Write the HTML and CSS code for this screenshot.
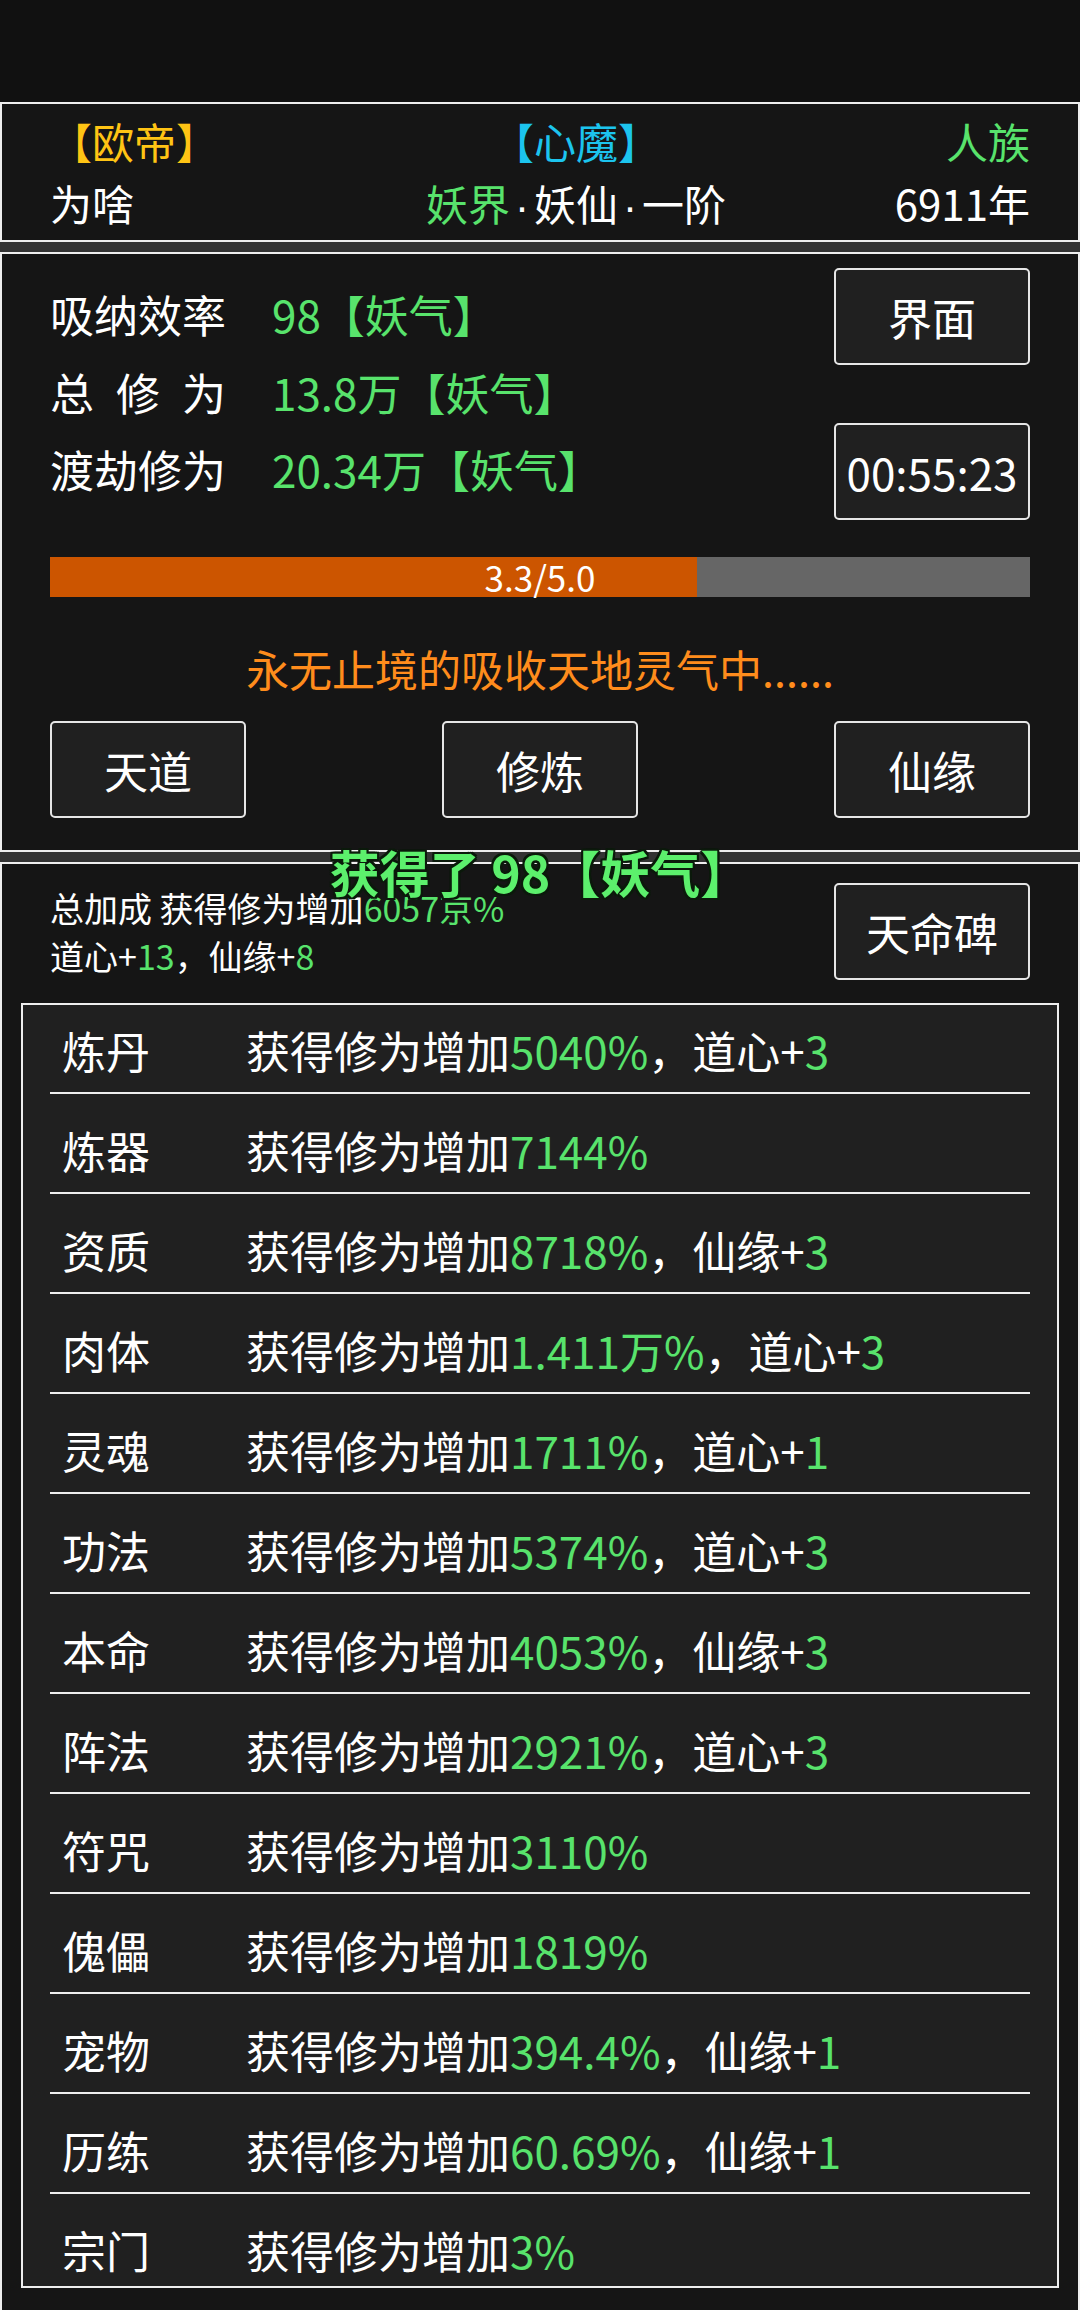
FILE: index.html
```html
<!DOCTYPE html>
<html lang="zh-CN">
<head>
  <meta charset="UTF-8" />
  <title>修炼</title>
  <link rel="stylesheet" href="styles.css">
</head>
<body>
  <div class="status-bar"></div>

  <div class="panel header">
    <div class="header-row">
      <span class="yellow">【欧帝】</span>
      <span class="mid cyan">【心魔】</span>
      <span class="right green">人族</span>
    </div>
    <div class="header-row">
      <span>为啥</span>
      <span class="mid"><span class="green">妖界</span><span class="dot">·</span>妖仙<span class="dot">·</span>一阶</span>
      <span class="right">6911年</span>
    </div>
  </div>

  <div class="gap"></div>

  <div class="panel cultivate">
    <div class="stats-row">
      <div class="stats">
        <div class="stat">
          <span class="label">吸纳效率</span>
          <span class="value green">98【妖气】</span>
        </div>
        <div class="stat">
          <span class="label spread"><span>总</span><span>修</span><span>为</span></span>
          <span class="value green">13.8万【妖气】</span>
        </div>
        <div class="stat">
          <span class="label">渡劫修为</span>
          <span class="value green">20.34万【妖气】</span>
        </div>
      </div>
      <div class="side-btns">
        <button class="btn">界面</button>
        <button class="btn">00:55:23</button>
      </div>
    </div>

    <div class="progress">
      <div class="progress-fill" style="width: 66%"></div>
      <div class="progress-text">3.3/5.0</div>
    </div>

    <div class="message">永无止境的吸收天地灵气中......</div>

    <div class="actions">
      <button class="btn">天道</button>
      <button class="btn">修炼</button>
      <button class="btn">仙缘</button>
    </div>
  </div>

  <div class="gap"></div>

  <div class="panel bonus">
    <div class="toast">获得了 98【妖气】</div>

    <div class="bonus-top">
      <div class="summary">
        <div>总加成 获得修为增加<span class="green">6057京%</span></div>
        <div>道心+<span class="green">13</span>，仙缘+<span class="green">8</span></div>
      </div>
      <button class="btn">天命碑</button>
    </div>

    <div class="talents">
      <div class="talents-inner">
        <div class="talent"><span class="talent-name">炼丹</span><span>获得修为增加<span class="green">5040%</span>，道心+<span class="green">3</span></span></div>
        <div class="talent"><span class="talent-name">炼器</span><span>获得修为增加<span class="green">7144%</span></span></div>
        <div class="talent"><span class="talent-name">资质</span><span>获得修为增加<span class="green">8718%</span>，仙缘+<span class="green">3</span></span></div>
        <div class="talent"><span class="talent-name">肉体</span><span>获得修为增加<span class="green">1.411万%</span>，道心+<span class="green">3</span></span></div>
        <div class="talent"><span class="talent-name">灵魂</span><span>获得修为增加<span class="green">1711%</span>，道心+<span class="green">1</span></span></div>
        <div class="talent"><span class="talent-name">功法</span><span>获得修为增加<span class="green">5374%</span>，道心+<span class="green">3</span></span></div>
        <div class="talent"><span class="talent-name">本命</span><span>获得修为增加<span class="green">4053%</span>，仙缘+<span class="green">3</span></span></div>
        <div class="talent"><span class="talent-name">阵法</span><span>获得修为增加<span class="green">2921%</span>，道心+<span class="green">3</span></span></div>
        <div class="talent"><span class="talent-name">符咒</span><span>获得修为增加<span class="green">3110%</span></span></div>
        <div class="talent"><span class="talent-name">傀儡</span><span>获得修为增加<span class="green">1819%</span></span></div>
        <div class="talent"><span class="talent-name">宠物</span><span>获得修为增加<span class="green">394.4%</span>，仙缘+<span class="green">1</span></span></div>
        <div class="talent"><span class="talent-name">历练</span><span>获得修为增加<span class="green">60.69%</span>，仙缘+<span class="green">1</span></span></div>
        <div class="talent"><span class="talent-name">宗门</span><span>获得修为增加<span class="green">3%</span></span></div>
      </div>
    </div>
  </div>
</body>
</html>
```

FILE: styles.css
```css
:root {
  --fondo: #151515;
  --fondo-claro: #202020;
  --borde: #eeeeee;
  --verde: #58e36c;
  --amarillo: #ffc414;
  --cian: #1cc4ee;
  --naranja: #ff8c1c;
}

body {
  margin: 0;
  width: 1080px;
  background-color: #111111;
  color: #ffffff;
  font-family: "Noto Sans CJK SC", "Noto Sans", sans-serif;
}

.green {
  color: var(--verde);
}

.yellow {
  color: var(--amarillo);
}

.cyan {
  color: var(--cian);
}

.status-bar {
  height: 102px;
  background-color: #111111;
}

.panel {
  background-color: var(--fondo);
  border: 2px solid var(--borde);
}

.gap {
  height: 10px;
  background-color: #333333;
}

/* cabecera */
.header {
  padding: 6px 48px;
  font-size: 42px;
}

.header-row {
  display: grid;
  grid-template-columns: 372px 308px 1fr;
  height: 62px;
  line-height: 62px;
  white-space: nowrap;
}

.header-row .mid {
  text-align: center;
}

.header-row .right {
  text-align: right;
}

.dot {
  font-family: "Liberation Sans", sans-serif;
  line-height: 1;
  margin: 0 5px;
}

/* botones */
.btn {
  width: 196px;
  height: 97px;
  box-sizing: border-box;
  border: 2px solid #e6e6e6;
  border-radius: 5px;
  background-color: var(--fondo-claro);
  color: #ffffff;
  font-family: inherit;
  font-size: 44px;
  padding: 0;
  display: flex;
  align-items: center;
  justify-content: center;
}

/* cultivo */
.cultivate {
  padding: 14px 48px 32px;
}

.stats-row {
  display: flex;
  justify-content: space-between;
}

.stats {
  display: flex;
  flex-direction: column;
  justify-content: space-between;
  padding: 16px 0 21px;
  font-size: 44px;
}

.stat {
  display: flex;
  line-height: 60px;
}

.label {
  width: 176px;
}

.spread {
  display: flex;
  justify-content: space-between;
}

.value {
  margin-left: 46px;
}

.side-btns {
  display: flex;
  flex-direction: column;
  gap: 58px;
}

.progress {
  position: relative;
  margin-top: 37px;
  height: 40px;
  background-color: #666666;
}

.progress-fill {
  height: 100%;
  background-color: #cc5500;
}

.progress-text {
  position: absolute;
  top: 0;
  left: 0;
  right: 0;
  text-align: center;
  font-size: 35px;
  line-height: 40px;
}

.message {
  margin-top: 41px;
  line-height: 60px;
  text-align: center;
  font-size: 43px;
  color: var(--naranja);
}

.actions {
  margin-top: 23px;
  display: flex;
  justify-content: space-between;
}

/* bonificaciones */
.bonus {
  position: relative;
  border-bottom: none;
  padding: 0 19px 22px;
}

.toast {
  position: absolute;
  top: -22px;
  left: 0;
  right: 0;
  text-align: center;
  font-size: 50px;
  font-weight: 700;
  line-height: 58px;
  color: #5cf06c;
  text-shadow:
    2px 0 0 #0b1a0b, -2px 0 0 #0b1a0b, 0 2px 0 #0b1a0b, 0 -2px 0 #0b1a0b,
    2px 2px 0 #0b1a0b, -2px -2px 0 #0b1a0b, 2px -2px 0 #0b1a0b, -2px 2px 0 #0b1a0b;
}

.bonus-top {
  display: flex;
  justify-content: space-between;
  padding: 19px 29px 0;
}

.summary {
  font-size: 34px;
  line-height: 48px;
  margin-top: 1px;
}

.talents {
  margin-top: 23px;
  height: 1285px;
  box-sizing: border-box;
  overflow: hidden;
  border: 2px solid var(--borde);
  background-color: var(--fondo-claro);
  padding: 0 27px;
}

.talents-inner {
  margin-top: -11px;
}

.talent {
  display: flex;
  align-items: center;
  height: 100px;
  box-sizing: border-box;
  padding: 14px 12px 0;
  border-bottom: 2px solid var(--borde);
  font-size: 44px;
}

.talent-name {
  width: 184px;
  flex-shrink: 0;
}
```
